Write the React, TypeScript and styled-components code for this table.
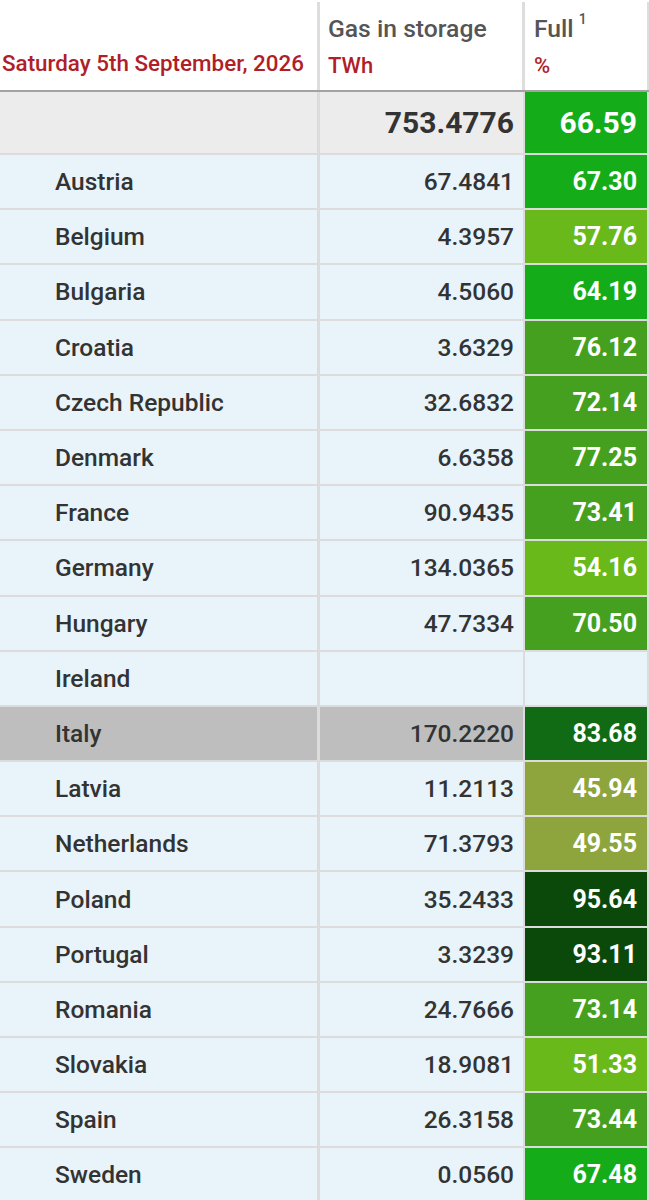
import React from "react";
import styled, { createGlobalStyle } from "styled-components";

const GlobalStyle = createGlobalStyle`
  html, body { margin: 0; padding: 0; background: #ffffff; }
  body { font-family: Roboto, "Noto Sans", "Liberation Sans", sans-serif; }
`;

const Table = styled.div`
  width: 649px;
  display: flex;
  flex-direction: column;
`;

const HeaderRow = styled.div`
  display: grid;
  grid-template-columns: 320px 205px 124px;
  margin-top: 2px;
  height: 88px;
  border-bottom: 2px solid #a3a3a3;
  background: #ffffff;
`;

const HeaderCell = styled.div<{ $last?: boolean; $pad: number; $bottom: number }>`
  display: flex;
  flex-direction: column;
  justify-content: flex-end;
  padding: 0 0 ${(p) => p.$bottom}px ${(p) => p.$pad}px;
  border-right: ${(p) => (p.$last ? 2 : 3)}px solid #dddddd;
  box-sizing: border-box;
`;

const HeadTitle = styled.div`
  font-size: 24.7px;
  font-weight: 500;
  color: #555555;
  line-height: 37px;
  white-space: nowrap;
`;

const Sup = styled.sup`
  font-size: 14px;
  vertical-align: top;
  position: relative;
  top: -9px;
  margin-left: 5px;
`;

const HeadUnit = styled.div<{ $size?: number }>`
  font-size: ${(p) => p.$size ?? 22}px;
  font-weight: 500;
  color: #b01e28;
  line-height: 37px;
  white-space: nowrap;
`;

const Row = styled.div<{ $total?: boolean }>`
  display: grid;
  grid-template-columns: 320px 205px 124px;
  height: ${(p) => (p.$total ? 61 : 53.2)}px;
  border-bottom: 2px solid #dcdcdc;
  background: ${(p) => (p.$total ? "#ececec" : "#e8f4fa")};
`;

const NameCell = styled.div<{ $hl?: boolean }>`
  display: flex;
  align-items: center;
  padding-left: 55px;
  border-right: 3px solid #dcdcdc;
  background: ${(p) => (p.$hl ? "#bebebe" : "transparent")};
  font-size: 24.5px;
  font-weight: 500;
  color: #333333;
  white-space: nowrap;
`;

const ValueCell = styled.div<{ $hl?: boolean; $big?: boolean }>`
  display: flex;
  align-items: center;
  justify-content: flex-end;
  padding-right: 9px;
  border-right: 2px solid #dcdcdc;
  background: ${(p) => (p.$hl ? "#bebebe" : "transparent")};
  font-size: ${(p) => (p.$big ? 30 : 24.5)}px;
  font-weight: ${(p) => (p.$big ? 700 : 500)};
  color: #333333;
`;

const FullCell = styled.div<{ $bg?: string; $big?: boolean }>`
  display: flex;
  align-items: center;
  justify-content: flex-end;
  padding-right: 10px;
  border-right: 2px solid #dcdcdc;
  background: ${(p) => p.$bg ?? "transparent"};
  font-size: ${(p) => (p.$big ? 30 : 25)}px;
  font-weight: 700;
  color: #ffffff;
`;

const G1 = "#14ad19";
const G2 = "#6ab91b";
const G3 = "#46a020";
const G4 = "#106b14";
const G5 = "#8ea53e";
const G6 = "#0a490a";

type Entry = { name: string; gas: string; full?: string; color?: string; hl?: boolean };

const rows: Entry[] = [
  { name: "Austria", gas: "67.4841", full: "67.30", color: G1 },
  { name: "Belgium", gas: "4.3957", full: "57.76", color: G2 },
  { name: "Bulgaria", gas: "4.5060", full: "64.19", color: G1 },
  { name: "Croatia", gas: "3.6329", full: "76.12", color: G3 },
  { name: "Czech Republic", gas: "32.6832", full: "72.14", color: G3 },
  { name: "Denmark", gas: "6.6358", full: "77.25", color: G3 },
  { name: "France", gas: "90.9435", full: "73.41", color: G3 },
  { name: "Germany", gas: "134.0365", full: "54.16", color: G2 },
  { name: "Hungary", gas: "47.7334", full: "70.50", color: G3 },
  { name: "Ireland", gas: "" },
  { name: "Italy", gas: "170.2220", full: "83.68", color: G4, hl: true },
  { name: "Latvia", gas: "11.2113", full: "45.94", color: G5 },
  { name: "Netherlands", gas: "71.3793", full: "49.55", color: G5 },
  { name: "Poland", gas: "35.2433", full: "95.64", color: G6 },
  { name: "Portugal", gas: "3.3239", full: "93.11", color: G6 },
  { name: "Romania", gas: "24.7666", full: "73.14", color: G3 },
  { name: "Slovakia", gas: "18.9081", full: "51.33", color: G2 },
  { name: "Spain", gas: "26.3158", full: "73.44", color: G3 },
  { name: "Sweden", gas: "0.0560", full: "67.48", color: G1 },
];

export default function App() {
  return (
    <>
      <GlobalStyle />
      <Table>
        <HeaderRow>
          <HeaderCell $pad={2} $bottom={8}>
            <HeadUnit $size={22.4}>Saturday 5th September, 2026</HeadUnit>
          </HeaderCell>
          <HeaderCell $pad={8} $bottom={6}>
            <HeadTitle>Gas in storage</HeadTitle>
            <HeadUnit>TWh</HeadUnit>
          </HeaderCell>
          <HeaderCell $pad={9} $bottom={6} $last>
            <HeadTitle>
              Full<Sup>1</Sup>
            </HeadTitle>
            <HeadUnit>%</HeadUnit>
          </HeaderCell>
        </HeaderRow>
        <Row $total>
          <NameCell />
          <ValueCell $big>753.4776</ValueCell>
          <FullCell $big $bg={G1}>66.59</FullCell>
        </Row>
        {rows.map((r) => (
          <Row key={r.name}>
            <NameCell $hl={r.hl}>{r.name}</NameCell>
            <ValueCell $hl={r.hl}>{r.gas}</ValueCell>
            <FullCell $bg={r.color}>{r.full ?? ""}</FullCell>
          </Row>
        ))}
      </Table>
    </>
  );
}
